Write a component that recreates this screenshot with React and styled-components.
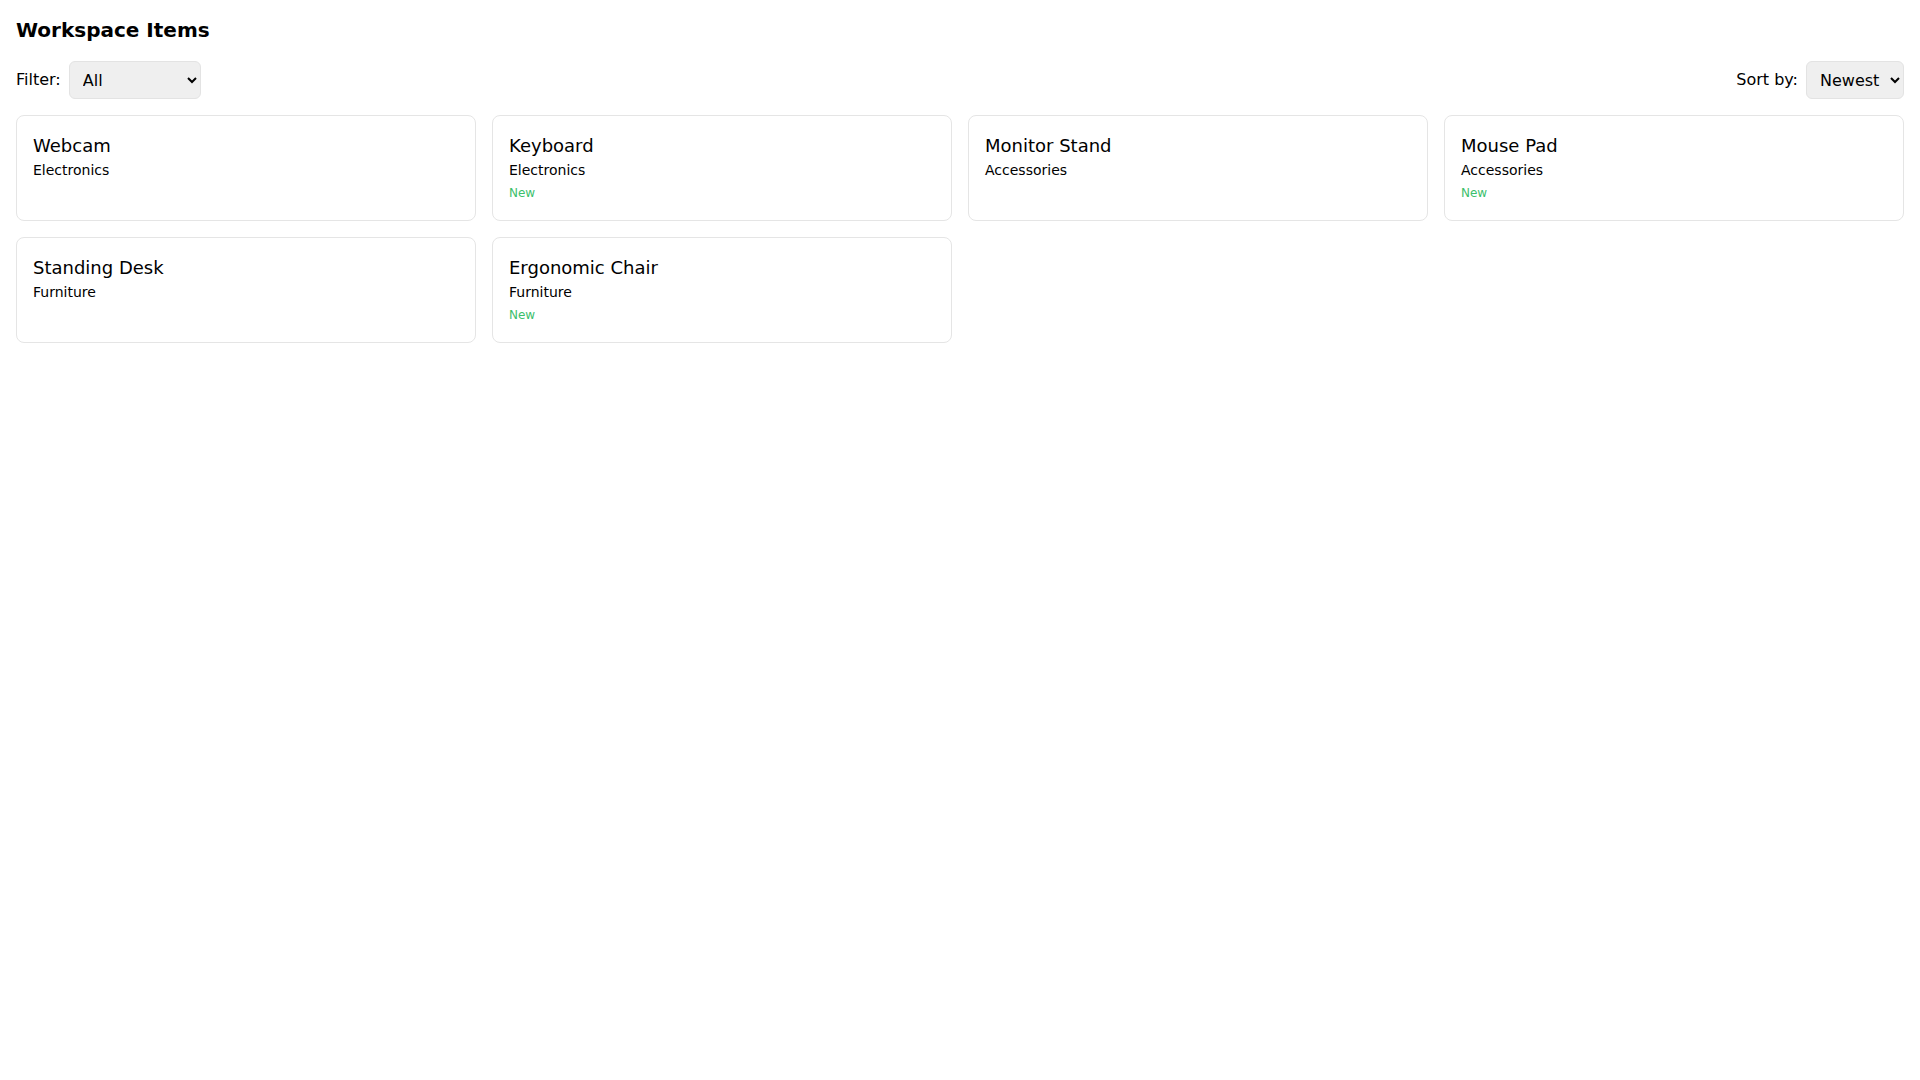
import React, { useState } from 'react'
import styled, { createGlobalStyle } from 'styled-components'

const GlobalStyle = createGlobalStyle`
  body {
    margin: 0;
    font-family: "DejaVu Sans", Verdana, sans-serif;
    color: #000;
    background: #fff;
  }
`

const items = [
    { id: 6, name: 'Webcam', category: 'Electronics', isNew: false },
    { id: 5, name: 'Keyboard', category: 'Electronics', isNew: true },
    { id: 4, name: 'Monitor Stand', category: 'Accessories', isNew: false },
    { id: 3, name: 'Mouse Pad', category: 'Accessories', isNew: true },
    { id: 2, name: 'Standing Desk', category: 'Furniture', isNew: false },
    { id: 1, name: 'Ergonomic Chair', category: 'Furniture', isNew: true },
]

const App = () => {
    const [filter, setFilter] = useState('All')
    const [sort, setSort] = useState('newest')

    const shown = items
        .filter((item) => filter === 'All' || item.category === filter)
        .sort((a, b) => (sort === 'newest' ? b.id - a.id : a.id - b.id))

    return (
        <Wrapper>
            <GlobalStyle />
            <h1>Workspace Items</h1>

            <div className="toolbar">
                <label>
                    Filter:
                    <select value={filter} onChange={(e) => setFilter(e.target.value)}>
                        <option value="All">All</option>
                        <option value="Electronics">Electronics</option>
                        <option value="Accessories">Accessories</option>
                        <option value="Furniture">Furniture</option>
                    </select>
                </label>
                <label>
                    Sort by:
                    <select value={sort} onChange={(e) => setSort(e.target.value)}>
                        <option value="newest">Newest</option>
                        <option value="oldest">Oldest</option>
                    </select>
                </label>
            </div>

            <div className="grid">
                {shown.map((item) => (
                    <Card key={item.id}>
                        <h3>{item.name}</h3>
                        <p>{item.category}</p>
                        {item.isNew && <Badge>New</Badge>}
                    </Card>
                ))}
            </div>
        </Wrapper>
    )
}

const Wrapper = styled.main`
    padding: 16px;
    line-height: 1.5;

    h1 {
        margin: 0 0 17px;
        font-size: 20px;
        line-height: 1.4;
        font-weight: 700;
    }

    .toolbar {
        display: flex;
        justify-content: space-between;
        align-items: center;
        margin-bottom: 16px;
    }

    label {
        display: flex;
        align-items: center;
        gap: 8px;
        font-size: 16px;
    }

    select {
        height: 38px;
        padding: 0 7px 0 9px;
        font-family: inherit;
        font-size: 16px;
        color: #000;
        background: #efefef;
        border: 1px solid #e3e3e3;
        border-radius: 6px;
    }

    .grid {
        display: grid;
        grid-template-columns: repeat(4, 1fr);
        gap: 16px;
    }
`

const Card = styled.div`
    border: 1px solid #e5e5e5;
    border-radius: 8px;
    padding: 16px;
    min-height: 72px;

    h3 {
        margin: 0;
        font-size: 18px;
        font-weight: 400;
    }

    p {
        margin: 1px 0 0;
        font-size: 14px;
    }
`

const Badge = styled.span`
    display: block;
    margin-top: 3px;
    font-size: 12px;
    color: #3cc06c;
`

export default App
